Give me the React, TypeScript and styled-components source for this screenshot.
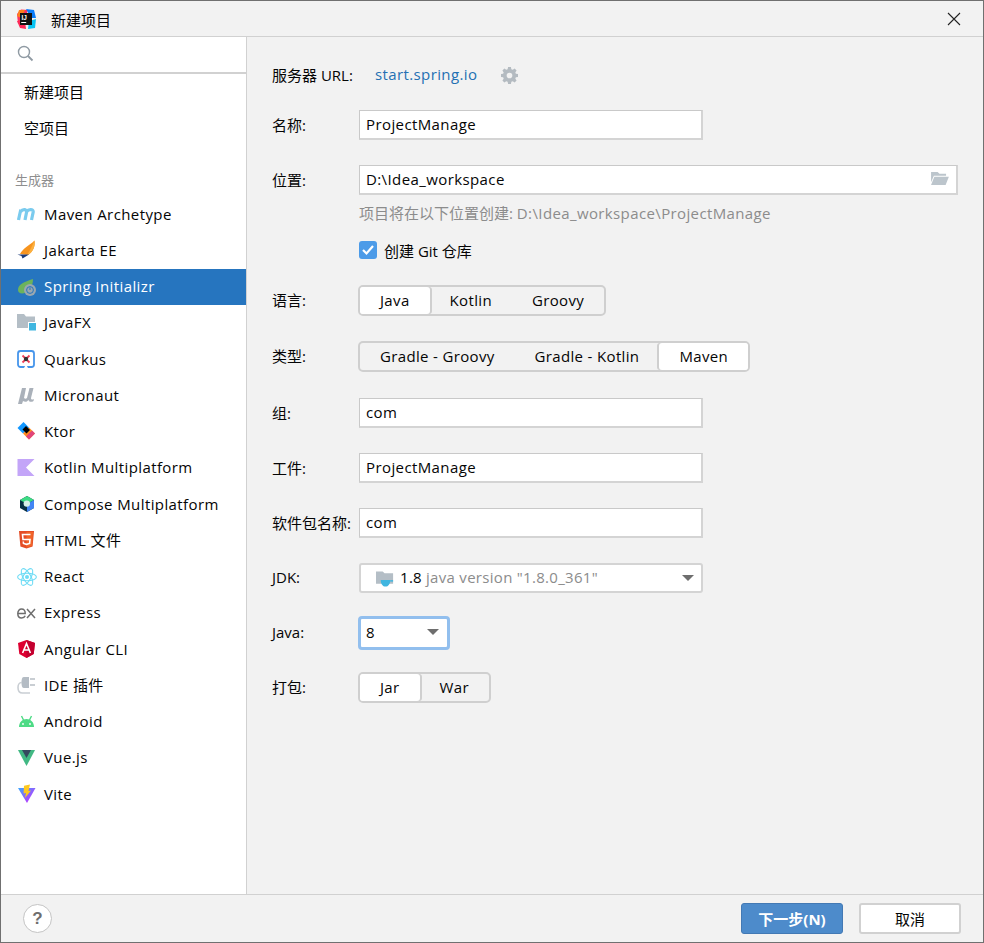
import React from 'react';
import styled, { createGlobalStyle } from 'styled-components';

const GlobalStyle = createGlobalStyle`
  html, body {
    margin: 0;
    padding: 0;
  }
  body {
    font-family: "Open Sans", "Noto Sans CJK SC", sans-serif;
    font-size: 15px;
    color: #050505;
  }
`;

const Window = styled.div`
  box-sizing: border-box;
  width: 984px;
  height: 943px;
  display: flex;
  flex-direction: column;
  background: #f2f2f2;
  border: 1px solid #707070;
  overflow: hidden;
`;

const TitleBar = styled.div`
  flex: none;
  height: 36px;
  box-sizing: border-box;
  display: flex;
  align-items: center;
  padding: 1px 22px 0 15px;
  border-bottom: 1px solid #d1d1d1;
`;

const TitleText = styled.span`
  margin-left: 15px;
  flex: 1;
`;

const Body = styled.div`
  flex: 1;
  min-height: 0;
  display: flex;
`;

const Sidebar = styled.div`
  flex: none;
  width: 246px;
  box-sizing: border-box;
  background: #fff;
  border-right: 1px solid #d1d1d1;
  display: flex;
  flex-direction: column;
`;

const SearchBox = styled.div`
  flex: none;
  height: 37px;
  box-sizing: border-box;
  display: flex;
  align-items: center;
  padding: 0 0 3px 16px;
  border-bottom: 2px solid #d1d1d1;
`;

const PlainItem = styled.div`
  height: 36.25px;
  box-sizing: border-box;
  display: flex;
  align-items: center;
  padding: 0 0 2px 23px;
`;

const SideLabel = styled.div`
  margin-top: 17px;
  height: 32.5px;
  display: flex;
  align-items: center;
  padding: 0 0 0 14px;
  box-sizing: border-box;
  font-size: 13px;
  color: #8e8e8e;
`;

const SideItem = styled.div<{ $active?: boolean }>`
  height: 36.25px;
  box-sizing: border-box;
  display: flex;
  align-items: center;
  padding-left: 16px;
  letter-spacing: 0.4px;
  background: ${(p) => (p.$active ? '#2675bf' : 'transparent')};
  color: ${(p) => (p.$active ? '#fff' : 'inherit')};
`;

const ItemName = styled.span`
  margin-bottom: 1px;
`;

const IconSlot = styled.span`
  flex: none;
  width: 20px;
  height: 20px;
  margin-right: 7px;
  display: block;
  svg {
    display: block;
  }
`;

const Form = styled.div`
  flex: 1;
  min-width: 0;
  display: flex;
  flex-direction: column;
  padding: 23px 25px 0 25px;
`;

const Row = styled.div<{ $gap?: number }>`
  min-height: 30px;
  display: flex;
  align-items: center;
  margin-top: ${(p) => p.$gap ?? 25}px;
`;

const Label = styled.label`
  flex: none;
  width: 87px;
  padding-bottom: 2px;
`;

const ServerLabel = styled.span`
  padding-bottom: 2px;
`;

const ServerLink = styled.span`
  color: #2470b3;
  letter-spacing: 0.4px;
  margin: 0 24px 2px 22px;
`;

const TextBox = styled.div<{ $wide?: boolean }>`
  box-sizing: border-box;
  width: ${(p) => (p.$wide ? '600px' : '344px')};
  height: 30px;
  display: flex;
  align-items: center;
  justify-content: space-between;
  padding: 0 7px 2px 6px;
  letter-spacing: 0.4px;
  background: #fff;
  border-style: solid;
  border-width: 1px 2px 2px 1px;
  border-color: #c9c9c9 #d4d4d4 #d4d4d4 #c9c9c9;
`;

const Hint = styled.div`
  margin: 7px 0 0 87px;
  height: 22px;
  line-height: 22px;
  color: #8c8c8c;
`;

const LatinPart = styled.span`
  letter-spacing: 0.38px;
`;

const CheckRow = styled.div`
  margin: 15px 0 0 87px;
  height: 22px;
  display: flex;
  align-items: center;
`;

const CheckMark = styled.span`
  flex: none;
  width: 18px;
  height: 18px;
  margin-right: 7px;
  border-radius: 3px;
  background: #4c9be8;
  display: flex;
  align-items: center;
  justify-content: center;
`;

const Segments = styled.div`
  display: flex;
  height: 31px;
  box-sizing: border-box;
  margin-left: -1px;
  border: 2px solid #cfcfcf;
  border-radius: 5px;
  letter-spacing: 0.34px;
`;

const Segment = styled.div<{ $on?: boolean; $side?: 'left' | 'right' }>`
  display: flex;
  align-items: center;
  padding: 0 20px 1px;
  background: ${(p) => (p.$on ? '#fff' : 'transparent')};
  border-radius: 3px;
  box-shadow: ${(p) => (p.$on ? (p.$side === 'right' ? '-2px 0 0 #cfcfcf' : '2px 0 0 #cfcfcf') : 'none')};
`;

const Combo = styled.div`
  box-sizing: border-box;
  width: 344px;
  height: 30px;
  display: flex;
  align-items: center;
  padding: 0 7px 0 15px;
  background: #fff;
  border: 2px solid #d4d4d4;
  border-radius: 3px;
`;

const ComboIcon = styled.svg`
  flex: none;
  margin-right: 5px;
`;

const ComboValue = styled.span`
  letter-spacing: 0.3px;
  margin-bottom: 2px;
`;

const ComboMuted = styled(ComboValue)`
  color: #8c8c8c;
  margin-left: 4px;
  flex: 1;
`;

const SmallCombo = styled.div`
  box-sizing: border-box;
  width: 92px;
  height: 34px;
  margin-left: -1px;
  display: flex;
  align-items: center;
  justify-content: space-between;
  padding: 0 8px 2px 5px;
  background: #fff;
  border: 3px solid #92bfee;
  border-radius: 4px;
`;

const Arrow = styled.span`
  flex: none;
  width: 0;
  height: 0;
  border-left: 6px solid transparent;
  border-right: 6px solid transparent;
  border-top: 6px solid #6e6e6e;
`;

const Footer = styled.div`
  flex: none;
  height: 48px;
  box-sizing: border-box;
  display: flex;
  align-items: center;
  padding: 0 22px;
  border-top: 1px solid #d1d1d1;
`;

const HelpButton = styled.div`
  box-sizing: border-box;
  width: 29px;
  height: 29px;
  border: 1px solid #c4c4c4;
  border-radius: 50%;
  background: #fff;
  display: flex;
  align-items: center;
  justify-content: center;
  color: #6e6e6e;
  font-weight: 700;
  font-size: 17px;
  font-family: "Liberation Sans", sans-serif;
`;

const Spacer = styled.div`
  flex: 1;
`;

const Button = styled.div<{ $primary?: boolean }>`
  box-sizing: border-box;
  width: 102px;
  height: 31px;
  margin-left: 16px;
  display: flex;
  align-items: center;
  justify-content: center;
  border-radius: 3px;
  background: ${(p) => (p.$primary ? '#4d8bcb' : '#fff')};
  border: ${(p) => (p.$primary ? '1px solid #4379b4' : '2px solid #d1d1d1')};
  color: ${(p) => (p.$primary ? '#fff' : 'inherit')};
  font-weight: ${(p) => (p.$primary ? 700 : 400)};
`;

const Svg = ({ size = 20, children }: { size?: number; children: React.ReactNode }) => (
  <svg width={size} height={size} viewBox="0 0 20 20" fill="none">
    {children}
  </svg>
);

const IdeaLogo = () => (
  <Svg>
    <path d="M1 5 L5 0.5 L12 1 L9 10 L2 15Z" fill="#fe315d" />
    <path d="M10 0 L18 1 L20 9 L15 9Z" fill="#087cfa" />
    <path d="M1 12 L4 19 L10 20 L9 12Z" fill="#fe2857" />
    <path d="M12 20 L19 19 L20 10 L13 12Z" fill="#07c3f2" />
    <path d="M1 7 L3 1 L9 1 L5 9Z" fill="#fc801d" />
    <rect x="4" y="4" width="12" height="12" fill="#111" />
    <text x="5.5" y="10.5" fontSize="6.5" fontWeight="700" fill="#fff" fontFamily="Liberation Sans, sans-serif">IJ</text>
    <rect x="5.2" y="13" width="5" height="1" fill="#fff" />
  </Svg>
);

const MavenIcon = () => (
  <Svg>
    <path d="M1.5 16 L3.8 5.5 M3.8 7.5 C5.5 5 9.8 5 9.6 8 L8 16 M9.8 7.5 C11.5 5 16.6 5 16.2 8 L14.5 16" stroke="#7acbee" strokeWidth="3.2" />
  </Svg>
);

const JakartaIcon = () => (
  <Svg>
    <path d="M3 14 C6 8 12 6 17.5 0.5 C18.5 6 16 12 11 15Z" fill="#f7941e" />
    <path d="M10 15 C13 11 15 6 17.5 0.5 C18.5 6 16 12 11 15Z" fill="#fbb040" />
    <path d="M0.5 14.5 L12 14.5 L5.5 18.5 L4.5 16Z" fill="#1b3a7a" />
  </Svg>
);

const SpringIcon = () => (
  <Svg>
    <path d="M1 13 C1 7 7 5 16 2 C16 6 15 8 14 9 L8 16 C4 17 1 16 1 13Z" fill="#6cb35c" />
    <circle cx="13" cy="13" r="6" fill="#9aa7b0" />
    <circle cx="13" cy="13" r="3.4" fill="none" stroke="#2675bf" strokeWidth="1" />
    <path d="M13 10.5 V13" stroke="#2675bf" strokeWidth="1" />
  </Svg>
);

const JavaFxIcon = () => (
  <Svg>
    <path d="M0 1 H7 L9 3.5 H18 V15 H0Z" fill="#b4bec6" />
    <rect x="11.5" y="9.5" width="8" height="8.5" fill="#40b6e0" stroke="#fff" strokeWidth="1" />
  </Svg>
);

const QuarkusIcon = () => (
  <Svg>
    <rect x="1" y="2" width="16" height="16" rx="2.5" fill="#fff" stroke="#4695eb" strokeWidth="1.8" />
    <path d="M5.5 6.5 L12.5 13.5 M12.5 6.5 L5.5 13.5" stroke="#ef4058" strokeWidth="1.8" />
    <circle cx="9" cy="10" r="2.2" fill="#333" />
    <path d="M7 19 L9 15.5 L11 19Z" fill="#fff" />
  </Svg>
);

const MicronautIcon = () => (
  <Svg>
    <path d="M1 19 L5 3 H9 L7 13 C8 14 9 14 10 13 L12.5 3 H16.5 L14 13 C14 14.5 15 15 17 14 L16.5 16 C14.5 17.5 12 17 11.5 15 C9.5 17.5 7.5 17 6 16 L5 19Z" fill="#aab1ba" />
  </Svg>
);

const KtorIcon = () => (
  <Svg>
    <path d="M0.5 6 L6.5 0 L12 5.5 L6 11.5Z" fill="#1297ff" />
    <path d="M6 11.5 L12 5.5 L18 11.5 L12 17.5Z" fill="#ff8a1f" />
    <path d="M9 14.5 L15 8.5 L18 11.5 L12 17.5Z" fill="#e0457b" />
    <path d="M5.5 7.5 L9 4 L13 8 L9.5 11.5Z" fill="#000" />
  </Svg>
);

const KotlinIcon = () => (
  <Svg>
    <path d="M0.5 1 H17.5 L9 9.5 L17.5 18 H0.5Z" fill="#c3a5f8" />
  </Svg>
);

const ComposeIcon = () => (
  <Svg>
    <path d="M10 2 L17 6 V14 L10 18 L3 14 V6Z" fill="#073042" />
    <path d="M10 2 L17 6 L10 10 L3 6Z" fill="#3ddc84" />
    <path d="M17 6 V14 L10 18 V10Z" fill="#4285f4" />
    <circle cx="9.8" cy="9.6" r="3.2" fill="#d6f0e8" />
  </Svg>
);

const HtmlIcon = () => (
  <Svg>
    <path d="M2 1 H17 L15.6 16.5 L9.5 18.5 L3.4 16.5Z" fill="#e44d26" />
    <path d="M9.5 2 H16 L15 15.8 L9.5 17.5Z" fill="#f16529" />
    <path d="M13.5 4.5 H5.5 L6 9.5 H13 L12.6 13.4 L9.5 14.3 L6.5 13.4 L6.3 11.5" stroke="#fff" strokeWidth="1.6" />
  </Svg>
);

const ReactIcon = () => (
  <Svg>
    <g stroke="#6fdcf5" strokeWidth="1.1" fill="none">
      <ellipse cx="10" cy="10" rx="9.4" ry="3.8" />
      <ellipse cx="10" cy="10" rx="9.4" ry="3.8" transform="rotate(60 10 10)" />
      <ellipse cx="10" cy="10" rx="9.4" ry="3.8" transform="rotate(120 10 10)" />
    </g>
    <circle cx="10" cy="10" r="2" fill="#6fdcf5" />
  </Svg>
);

const ExpressIcon = () => (
  <Svg>
    <path d="M0.8 10.5 H8.2 C8.4 7.5 6.8 6 4.6 6 C2.4 6 0.8 7.8 0.8 10.5 C0.8 13.2 2.4 15 4.6 15 C6.2 15 7.6 14.2 8.2 12.8" stroke="#6e6e6e" strokeWidth="1.5" />
    <path d="M10 6 L18 15 M18 6 L10 15" stroke="#6e6e6e" strokeWidth="1.5" />
  </Svg>
);

const AngularIcon = () => (
  <Svg>
    <path d="M9.5 1 L18 4 L16.7 15 L9.5 19 L2.3 15 L1 4Z" fill="#dd0031" />
    <path d="M9.5 1 L18 4 L16.7 15 L9.5 19Z" fill="#c3002f" />
    <path d="M5.6 14 L9.5 4.5 L13.4 14 M7 11 H12" stroke="#fff" strokeWidth="1.6" />
  </Svg>
);

const PluginIcon = () => (
  <Svg>
    <path d="M7 2 H12 V13 H7 C5 13 4.5 11 4.5 7.5 C4.5 4 5 2 7 2Z" fill="#b4bcc4" />
    <path d="M13 4 H18 M13 10 H18" stroke="#c9ced3" strokeWidth="2" />
    <path d="M5 7.5 H4.5 C2.5 7.5 1 9.5 1 12.5 C1 16 3 18 5.5 18 H13" stroke="#c9ced3" strokeWidth="1.6" />
  </Svg>
);

const AndroidIcon = () => (
  <Svg>
    <path d="M2 15 C2 10 5.5 7 9.5 7 C13.5 7 17 10 17 15Z" fill="#4ddb85" />
    <path d="M4.5 4 L6.5 8 M14.5 4 L12.5 8" stroke="#4ddb85" strokeWidth="1.4" />
    <circle cx="6" cy="12" r="0.9" fill="#fff" />
    <circle cx="13" cy="12" r="0.9" fill="#fff" />
  </Svg>
);

const VueIcon = () => (
  <Svg>
    <path d="M1 2 H18 L9.5 18Z" fill="#41b883" />
    <path d="M5 2 H14 L9.5 10Z" fill="#35495e" />
  </Svg>
);

const ViteIcon = () => (
  <Svg>
    <path d="M1 4 L18.5 4 L10 19Z" fill="url(#vite-a)" />
    <path d="M13 0.5 L7 1.8 L6.6 9.5 L9 9 L8 14 L14 6.5 L11.5 7Z" fill="#ffc91f" />
    <defs>
      <linearGradient id="vite-a" x1="2" y1="4" x2="14" y2="18" gradientUnits="userSpaceOnUse">
        <stop stopColor="#41a6ff" />
        <stop offset="1" stopColor="#bd34fe" />
      </linearGradient>
    </defs>
  </Svg>
);

const items: { name: string; icon: React.ReactNode; active?: boolean }[] = [
  { name: 'Maven Archetype', icon: <MavenIcon /> },
  { name: 'Jakarta EE', icon: <JakartaIcon /> },
  { name: 'Spring Initializr', icon: <SpringIcon />, active: true },
  { name: 'JavaFX', icon: <JavaFxIcon /> },
  { name: 'Quarkus', icon: <QuarkusIcon /> },
  { name: 'Micronaut', icon: <MicronautIcon /> },
  { name: 'Ktor', icon: <KtorIcon /> },
  { name: 'Kotlin Multiplatform', icon: <KotlinIcon /> },
  { name: 'Compose Multiplatform', icon: <ComposeIcon /> },
  { name: 'HTML 文件', icon: <HtmlIcon /> },
  { name: 'React', icon: <ReactIcon /> },
  { name: 'Express', icon: <ExpressIcon /> },
  { name: 'Angular CLI', icon: <AngularIcon /> },
  { name: 'IDE 插件', icon: <PluginIcon /> },
  { name: 'Android', icon: <AndroidIcon /> },
  { name: 'Vue.js', icon: <VueIcon /> },
  { name: 'Vite', icon: <ViteIcon /> }
];

export default function App() {
  return (
    <>
      <GlobalStyle />
      <Window>
        <TitleBar>
          <IdeaLogo />
          <TitleText>新建项目</TitleText>
          <svg width="14" height="14" viewBox="0 0 14 14">
            <path d="M1 1 L13 13 M13 1 L1 13" stroke="#222" strokeWidth="1.1" />
          </svg>
        </TitleBar>
        <Body>
          <Sidebar>
            <SearchBox>
              <svg width="17" height="17" viewBox="0 0 17 17" fill="none">
                <circle cx="7" cy="7" r="5.5" stroke="#8f9aa3" strokeWidth="1.4" />
                <path d="M11 11 L15.5 15.5" stroke="#8f9aa3" strokeWidth="1.8" />
              </svg>
            </SearchBox>
            <PlainItem>新建项目</PlainItem>
            <PlainItem>空项目</PlainItem>
            <SideLabel>生成器</SideLabel>
            {items.map((item) => (
              <SideItem key={item.name} $active={item.active}>
                <IconSlot>{item.icon}</IconSlot>
                <ItemName>{item.name}</ItemName>
              </SideItem>
            ))}
          </Sidebar>
          <Form>
            <Row $gap={0}>
              <ServerLabel>服务器 URL:</ServerLabel>
              <ServerLink>start.spring.io</ServerLink>
              <svg width="17" height="17" viewBox="0 0 24 24" fill="#b4bbc1">
                <path d="M10 0 H14 L14.6 3.2 L16.6 4 L19.3 2.2 L22 5 L20.2 7.6 L21 9.5 L24 10 V14 L21 14.5 L20.2 16.5 L22 19.2 L19.3 21.9 L16.6 20.1 L14.6 20.9 L14 24 H10 L9.4 20.9 L7.4 20.1 L4.7 21.9 L2 19.2 L3.8 16.5 L3 14.5 L0 14 V10 L3 9.5 L3.8 7.6 L2 5 L4.7 2.2 L7.4 4 L9.4 3.2Z M12 8 A4 4 0 1 0 12 16 A4 4 0 1 0 12 8Z" fillRule="evenodd" />
              </svg>
            </Row>
            <Row $gap={20}>
              <Label>名称:</Label>
              <TextBox>ProjectManage</TextBox>
            </Row>
            <Row>
              <Label>位置:</Label>
              <TextBox $wide>
                D:\Idea_workspace
                <svg width="19" height="15" viewBox="0 0 20 16" fill="#bcc5cc">
                  <path d="M1 1 H8 L10 3 H17 V5 H4 L1 12Z" />
                  <path d="M4.5 6 H20 L16.5 15 H1Z" />
                </svg>
              </TextBox>
            </Row>
            <Hint>
              项目将在以下位置创建: <LatinPart>D:\Idea_workspace\ProjectManage</LatinPart>
            </Hint>
            <CheckRow>
              <CheckMark>
                <svg width="14" height="12" viewBox="0 0 14 12" fill="none">
                  <path d="M2 6 L5.5 9.5 L12 2" stroke="#fff" strokeWidth="2.2" />
                </svg>
              </CheckMark>
              创建 Git 仓库
            </CheckRow>
            <Row $gap={24}>
              <Label>语言:</Label>
              <Segments>
                <Segment $on>Java</Segment>
                <Segment>Kotlin</Segment>
                <Segment>Groovy</Segment>
              </Segments>
            </Row>
            <Row>
              <Label>类型:</Label>
              <Segments>
                <Segment>Gradle - Groovy</Segment>
                <Segment>Gradle - Kotlin</Segment>
                <Segment $on $side="right">Maven</Segment>
              </Segments>
            </Row>
            <Row $gap={26}>
              <Label>组:</Label>
              <TextBox>com</TextBox>
            </Row>
            <Row>
              <Label>工件:</Label>
              <TextBox>ProjectManage</TextBox>
            </Row>
            <Row>
              <Label>软件包名称:</Label>
              <TextBox>com</TextBox>
            </Row>
            <Row>
              <Label>JDK:</Label>
              <Combo>
                <ComboIcon width="19" height="17" viewBox="0 0 20 17">
                  <path d="M0 1 H7 L9 3 H18 V14 H0Z" fill="#b4bec6" />
                  <path d="M5 10 H15 C15 14 13 17 10 17 C7 17 5 14 5 10Z" fill="#40b6e0" />
                  <path d="M15 11 H18" stroke="#40b6e0" strokeWidth="1.6" />
                </ComboIcon>
                <ComboValue>1.8</ComboValue>
                <ComboMuted>java version "1.8.0_361"</ComboMuted>
                <Arrow />
              </Combo>
            </Row>
            <Row $gap={23}>
              <Label>Java:</Label>
              <SmallCombo>
                8
                <Arrow />
              </SmallCombo>
            </Row>
            <Row $gap={22}>
              <Label>打包:</Label>
              <Segments>
                <Segment $on>Jar</Segment>
                <Segment>War</Segment>
              </Segments>
            </Row>
          </Form>
        </Body>
        <Footer>
          <HelpButton>?</HelpButton>
          <Spacer />
          <Button $primary>下一步(N)</Button>
          <Button>取消</Button>
        </Footer>
      </Window>
    </>
  );
}
